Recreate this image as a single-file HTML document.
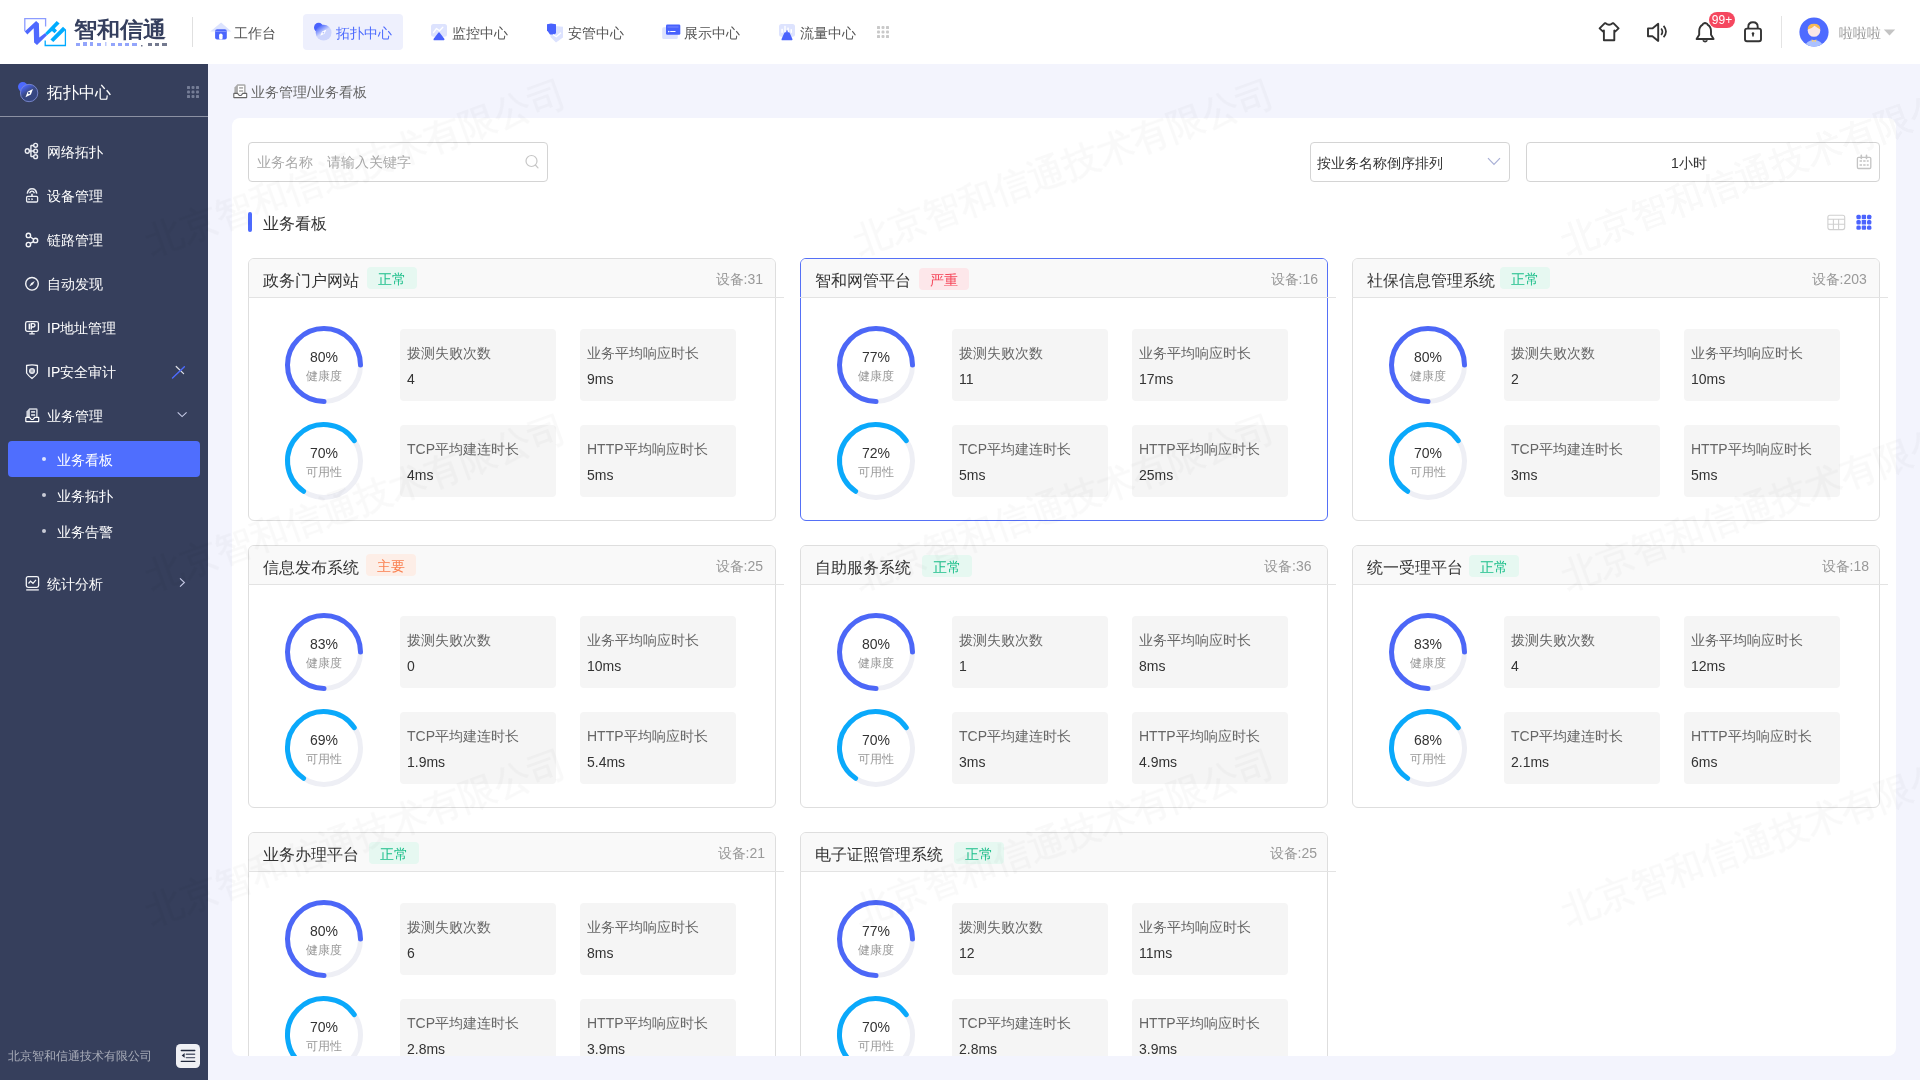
<!DOCTYPE html>
<html><head><meta charset="utf-8">
<style>
*{margin:0;padding:0;box-sizing:border-box}
html,body{width:1920px;height:1080px;overflow:hidden}
body{position:relative;background:#f3f4fd;font-family:"Liberation Sans",sans-serif;color:#333;font-size:14px}
.abs{position:absolute}
#hdr{position:absolute;left:0;top:0;width:1920px;height:64px;background:#fff}
.nav{position:absolute;top:23px;height:20px;line-height:20px;font-size:14px;color:#555;white-space:nowrap}
.nav svg{position:absolute}
.nav.act{color:#4d6bfe}
#side{position:absolute;left:0;top:64px;width:208px;height:1016px;background:#363f5c}
.si{position:absolute;margin-top:1px;left:47px;font-size:14px;color:#fff;white-space:nowrap;line-height:20px}
.sic{position:absolute}
.sub{position:absolute;margin-top:1px;left:57px;font-size:14px;color:#fff;line-height:20px}
.dot{position:absolute;left:42px;width:4px;height:4px;border-radius:2px;background:#c9ccd6}
#panel{position:absolute;left:232px;top:118px;width:1664px;height:938px;background:#fff;border-radius:8px}
.inp{position:absolute;border:1px solid #d4d4d4;border-radius:4px;background:#fff}
.card{position:absolute;width:528px;height:263px;border:1px solid #dedede;border-radius:6px;background:#fff;overflow:hidden}
.card::before{content:"";position:absolute;left:0;top:0;right:0;height:39px;background:#f9f9f9}
.card.sel{border-color:#5570f6}
.chl{position:absolute;width:536px;height:1px;background:#e3e3e3}
.ctitle{position:absolute;font-size:16px;color:#333;line-height:22px;white-space:nowrap}
.tag{position:absolute;height:22px;line-height:24px;width:50px;text-align:center;border-radius:4px;font-size:14px}
.tn{background:#e6f8f1;color:#1dbf8b}
.ts{background:#fde7ea;color:#f5475b}
.tm{background:#fdeee7;color:#fa8050}
.cdev{position:absolute;white-space:nowrap;font-size:14px;color:#999;line-height:20px}
.ring{position:absolute}
.rpct{position:absolute;width:60px;text-align:center;font-size:14px;color:#333;line-height:18px}
.rlab{position:absolute;width:60px;text-align:center;font-size:12px;color:#999;line-height:16px}
.mbox{position:absolute;width:156px;height:72px;background:#f5f5f5;border-radius:4px}
.mt{position:absolute;left:7px;top:14px;font-size:14px;color:#666;line-height:20px;white-space:nowrap}
.mv{position:absolute;left:7px;top:40px;font-size:14px;color:#333;line-height:20px}
.wm{position:absolute;white-space:nowrap;font-size:36.5px;line-height:40px;color:#000;-webkit-text-stroke:0.7px #000;transform:translate(-50%,-50%) rotate(-20deg)}
</style></head><body><div id="root" style="position:absolute;left:0;top:0;width:1920px;height:1080px;overflow:hidden;will-change:transform;background:#f3f4fd">
<div id="hdr">
  <svg class="abs" style="left:20px;top:12px" width="50" height="40" viewBox="0 0 50 40">
    <path d="M4.8 19.3V6.7H25.6V14.4" stroke="#8c9cff" stroke-width="1.3" fill="none"/>
    <path d="M25.2 28.5V33.5H45.4V17.4" stroke="#00aaff" stroke-width="1.3" fill="none"/>
    <path d="M4.8 19.6L16.1 8.9L18.9 11.5L19.3 25.6L25.2 20.9L27 23.3L17 33L14.1 30.4L13.7 16.3L7.4 22.6Z" fill="#4f69ff"/>
    <path d="M25.2 20.9L36.7 8.9L39.6 11.5L34.8 16.3L37 18.6L34.5 21.2L32 18.9L27 23.3Z" fill="#00acff"/>
    <path d="M30.4 27.4L43 14.8L45.9 17.4L33.3 30Z" fill="#00acff"/>
  </svg>
  <div class="abs" style="left:74px;top:15px;font-size:23px;font-weight:900;color:#353f5e;line-height:28px;letter-spacing:0px;transform:scaleY(0.95)">智和信通</div>
  <svg class="abs" style="left:74px;top:42px" width="95" height="5" viewBox="0 0 95 5">
    <g fill="#7088fa" opacity="0.75">
    <rect x="2" y="1" width="4" height="3"/><rect x="9" y="0" width="4" height="4"/><rect x="16" y="0" width="3" height="4"/><rect x="23" y="1" width="4" height="3"/><rect x="31" y="0" width="1.5" height="4" opacity=".6"/><rect x="37" y="1" width="4" height="3"/><rect x="44" y="1" width="4" height="3"/><rect x="51" y="1" width="4" height="3"/><rect x="58" y="1" width="5" height="3"/>
    </g><g fill="#3a4260" opacity="0.7"><rect x="67" y="3" width="1.5" height="1.5"/><rect x="74" y="1" width="4" height="3"/><rect x="81" y="1" width="4" height="3"/><rect x="88" y="1" width="5" height="3"/></g>
  </svg>
  <div class="abs" style="left:192px;top:17px;width:1px;height:30px;background:#e0e0e0"></div>
  <!-- nav: home -->
  <svg class="abs" style="left:210px;top:22px" width="22" height="19" viewBox="0 0 22 19">
    <path d="M0.3 9.6L11.1 0.5L21.4 9.6Z" fill="#dce3fe"/>
    <rect x="5.1" y="7.3" width="11.7" height="10.3" rx="2" fill="#4b66fd"/>
    <rect x="5.1" y="9.2" width="11.7" height="0.8" fill="#8c9dfd"/>
    <rect x="9.1" y="11.6" width="3.5" height="6" rx="1.7" fill="#fff"/>
  </svg>
  <div class="nav" style="left:234px"><span>工作台</span></div>
  <div class="abs" style="left:303px;top:14px;width:100px;height:36px;background:#eef0fd;border-radius:4px"></div>
  <svg class="abs" style="left:312px;top:20px" width="22" height="22" viewBox="0 0 22 22">
    <defs><linearGradient id="cg" x1="0.2" y1="0.1" x2="0.7" y2="0.8"><stop offset="0" stop-color="#4a66fd"/><stop offset="0.55" stop-color="#cdd5fd"/><stop offset="1" stop-color="#cdd5fd"/></linearGradient></defs>
    <circle cx="6.6" cy="7.4" r="4.6" fill="#4a62fd"/>
    <circle cx="11.6" cy="12.7" r="7.9" fill="url(#cg)"/>
    <path d="M14.4 9.4L12.6 13.8L8.3 15.8L10.1 11.4Z" fill="#fff"/>
    <circle cx="11.4" cy="12.6" r="0.9" fill="#b8c3fd"/>
  </svg>
  <div class="nav act" style="left:336px"><span>拓扑中心</span></div>
  <svg class="abs" style="left:429px;top:22px" width="20" height="20" viewBox="0 0 20 20">
    <rect x="2" y="2" width="16" height="12.8" rx="2.5" fill="#dde3fe"/>
    <path d="M4.5 10.5L7.5 6.5L10.5 8.8L13.8 5.2" stroke="#fff" stroke-width="1.3" fill="none" stroke-linecap="round" stroke-linejoin="round"/>
    <path d="M10 11.2L14.6 17.4H5.4Z" fill="#4a63fd" stroke="#4a63fd" stroke-width="1.8" stroke-linejoin="round"/>
  </svg>
  <div class="nav" style="left:452px"><span>监控中心</span></div>
  <svg class="abs" style="left:545px;top:22px" width="20" height="22" viewBox="0 0 20 22">
    <path d="M5 4.5L12 4.2L18 4.8V15.5L11 20.5L5.5 15V4.5Z" fill="#dce2fe"/>
    <path d="M2 2.3L6 1.6L11 2.2V11.2L9 12.4H5L2 8.3Z" fill="#4862fd"/>
    <path d="M8 12.5L11.3 14.8L16 10.8" stroke="#fff" stroke-width="1.3" fill="none"/>
  </svg>
  <div class="nav" style="left:568px"><span>安管中心</span></div>
  <svg class="abs" style="left:661px;top:22px" width="21" height="20" viewBox="0 0 21 20">
    <rect x="1.2" y="5.2" width="15.6" height="11.8" rx="1.5" fill="#dce2fe"/>
    <rect x="5" y="2.4" width="14.3" height="10.3" rx="1.3" fill="#4862fd"/>
    <rect x="6.5" y="4.6" width="11" height="0.8" fill="#8797fd"/>
    <rect x="9.2" y="9" width="5.3" height="1" fill="#fff"/>
    <circle cx="7.8" cy="9.6" r="0.8" fill="#fff"/>
  </svg>
  <div class="nav" style="left:684px"><span>展示中心</span></div>
  <svg class="abs" style="left:777px;top:22px" width="20" height="20" viewBox="0 0 20 20">
    <rect x="2" y="2" width="16" height="12.8" rx="2.5" fill="#dde3fe"/>
    <rect x="4.3" y="6.8" width="1.6" height="4" fill="#fff"/><rect x="7.3" y="3.8" width="1.4" height="7" fill="#fff"/><rect x="10.3" y="5.6" width="1.5" height="5" fill="#fff"/><rect x="13.5" y="7.2" width="1.5" height="3.6" fill="#fff"/>
    <path d="M8.2 11.2H11.8L14.6 17.4H5.4Z" fill="#4a63fd" stroke="#4a63fd" stroke-width="1.8" stroke-linejoin="round"/>
    <rect x="9.3" y="8.2" width="1.4" height="3" rx="0.7" fill="#4a63fd"/>
  </svg>
  <div class="nav" style="left:800px"><span>流量中心</span></div>
  <svg class="abs" style="left:876px;top:25px" width="14" height="14" viewBox="0 0 14 14"><g fill="#c9c9c9">
    <rect x="1" y="1" width="3" height="3" rx=".6"/><rect x="5.5" y="1" width="3" height="3" rx="1"/><rect x="10" y="1" width="3" height="3" rx=".6"/>
    <rect x="1" y="5.5" width="3" height="3" rx="1"/><rect x="5.5" y="5.5" width="3" height="3" rx="1.2"/><rect x="10" y="5.5" width="3" height="3" rx="1"/>
    <rect x="1" y="10" width="3" height="3" rx=".6"/><rect x="5.5" y="10" width="3" height="3" rx="1"/><rect x="10" y="10" width="3" height="3" rx=".6"/></g></svg>
  <!-- right icons -->
  <svg class="abs" style="left:1596px;top:20px" width="26" height="24" viewBox="0 0 26 24" fill="none" stroke="#333" stroke-width="1.9" stroke-linejoin="round">
    <path d="M8.6 3.3H9.6Q13.1 6.2 16.6 3.3H17.6L22.6 8.4L19.4 11.4L18.3 10.5V20.3H7.9V10.5L6.8 11.4L3.6 8.4Z"/>
  </svg>
  <svg class="abs" style="left:1645px;top:21px" width="24" height="22" viewBox="0 0 24 22" fill="none" stroke="#333" stroke-width="1.9" stroke-linejoin="round">
    <path d="M3 7.4H7.4L13.2 2.8V19.9L7.4 15.3H3Z"/>
    <path d="M16.2 7.5Q18.6 10.8 16.2 14M18.6 4.9Q23.4 10.6 18.6 16.3" stroke-width="1.7"/>
  </svg>
  <svg class="abs" style="left:1694px;top:20px" width="22" height="24" viewBox="0 0 22 24" fill="none" stroke="#333" stroke-width="1.9" stroke-linejoin="round">
    <path d="M11 3Q13.5 3.5 13.5 4.6Q17 6.5 17 11V14.8L19.6 19H2.6L5.2 14.8V11Q5.2 6.5 8.7 4.6Q8.7 3.5 11 3Z"/>
    <path d="M8.8 20.4Q11.1 23 13.4 20.4" fill="#666" stroke="#333" stroke-width="1.4"/>
  </svg>
  <div class="abs" style="left:1709px;top:12px;width:26px;height:16px;border-radius:8px;background:#f5475f;color:#fff;font-size:12px;line-height:16px;text-align:center">99+</div>
  <svg class="abs" style="left:1742px;top:20px" width="22" height="24" viewBox="0 0 22 24" fill="none" stroke="#333" stroke-width="1.9">
    <path d="M6.3 8.2V6.8Q6.3 2.2 11 2.2Q15.7 2.2 15.7 6.8V8.2"/>
    <rect x="3" y="8.6" width="16" height="12.6" rx="2"/>
    <path d="M11 13.2V16.6" stroke-width="1.6"/><circle cx="11" cy="13.6" r="1.3" fill="#333" stroke="none"/>
  </svg>
  <div class="abs" style="left:1781px;top:16px;width:1px;height:32px;background:#e4e4e4"></div>
  <svg class="abs" style="left:1799px;top:17px" width="30" height="30" viewBox="0 0 30 30">
    <defs><clipPath id="av"><circle cx="15" cy="15" r="14.6"/></clipPath></defs>
    <circle cx="15" cy="15" r="14.6" fill="#4e6bff"/>
    <g clip-path="url(#av)">
    <ellipse cx="15" cy="30" rx="9" ry="7" fill="#abc1ff"/>
    <circle cx="15" cy="13.5" r="6.3" fill="#fbe7e6"/>
    <path d="M8.6 12.6Q8.6 6.7 15 6.7Q21.4 6.7 21.4 12.6Q18.5 11 15.5 8.8Q13 11.8 8.6 12.6Z" fill="#f7b955"/>
    <path d="M12.6 22.3L15 23.8L17.4 22.3L17 25L15 24.2L13 25Z" fill="#f9cf73"/>
    </g>
  </svg>
  <div class="abs" style="left:1839px;top:23px;font-size:14px;color:#999;line-height:20px">啦啦啦</div>
  <svg class="abs" style="left:1883px;top:29px" width="13" height="7" viewBox="0 0 13 7"><path d="M0.8 0.6H12.2L6.5 6.4Z" fill="#c4c4c4"/></svg>
</div>
<div id="side">
  <svg class="abs" style="left:14px;top:14px" width="30" height="30" viewBox="0 0 30 30">
    <defs><linearGradient id="sg" x1="0.2" y1="0.1" x2="0.6" y2="0.7"><stop offset="0" stop-color="#4a66fd"/><stop offset="0.6" stop-color="#3a4a86"/><stop offset="1" stop-color="#364680"/></linearGradient></defs>
    <circle cx="8.8" cy="8.8" r="4.8" fill="#4d69ff"/>
    <circle cx="15.1" cy="15.0" r="8.7" fill="url(#sg)" stroke="#7c8ad0" stroke-width="0.9"/>
    <path d="M18.9 11L16.9 16.5L11.5 19.3L13.6 13.8Z" fill="#fff"/>
    <circle cx="15" cy="15" r="1" fill="#3a4a86"/>
  </svg>
  <div class="abs" style="left:47px;top:18px;font-size:16px;color:#fff;line-height:22px">拓扑中心</div>
  <svg class="abs" style="left:186px;top:21px" width="14" height="14" viewBox="0 0 14 14"><g fill="#757d96">
    <rect x="1" y="1" width="3" height="3" rx=".6"/><rect x="5.5" y="1" width="3" height="3" rx="1"/><rect x="10" y="1" width="3" height="3" rx=".6"/>
    <rect x="1" y="5.5" width="3" height="3" rx="1"/><rect x="5.5" y="5.5" width="3" height="3" rx="1.2"/><rect x="10" y="5.5" width="3" height="3" rx="1"/>
    <rect x="1" y="10" width="3" height="3" rx=".6"/><rect x="5.5" y="10" width="3" height="3" rx="1"/><rect x="10" y="10" width="3" height="3" rx=".6"/></g></svg>
  <div class="abs" style="left:0;top:52px;width:208px;height:1px;background:#8c91a3"></div>
  <!-- icons -->
  <svg class="abs" style="left:22px;top:77px" width="20" height="20" viewBox="0 0 20 20" fill="none" stroke="#eceef3" stroke-width="1.4">
    <ellipse cx="5.3" cy="10" rx="2" ry="2.3"/>
    <path d="M7.3 10H12.5M8.9 4.3V15.7M8.9 4.5H12M8.9 15.5H12"/>
    <circle cx="13.6" cy="4.3" r="1.9"/><circle cx="13.6" cy="10" r="1.9"/><circle cx="13.6" cy="15.7" r="1.9"/>
  </svg>
  <svg class="abs" style="left:22px;top:121px" width="20" height="20" viewBox="0 0 20 20" fill="none" stroke="#eceef3" stroke-width="1.3">
    <path d="M5.3 8.7Q6 3.8 10 3.8Q14 3.8 14.7 8.7" stroke-width="1.5"/>
    <path d="M7.6 8.2Q8.2 6.2 10 6.2Q11.8 6.2 12.4 8.2"/>
    <path d="M10 8.8V11" stroke-width="1.6"/>
    <rect x="4.6" y="11.4" width="11" height="5.6" rx="1"/>
    <path d="M6.6 13.6L8 14.2L6.6 14.8ZM9.6 13.6L11 14.2L9.6 14.8Z" fill="#eceef3" stroke-width="0.6"/>
  </svg>
  <svg class="abs" style="left:22px;top:165px" width="20" height="20" viewBox="0 0 20 20" fill="none" stroke="#f4f5f8" stroke-width="1.4">
    <circle cx="6.4" cy="6.4" r="2.2"/><circle cx="13.5" cy="11.4" r="2.2"/><circle cx="6.4" cy="15.6" r="2.2"/>
    <path d="M8.2 7.7L11.6 10.2M11.6 12.6L8.2 14.4"/>
  </svg>
  <svg class="abs" style="left:22px;top:209px" width="20" height="20" viewBox="0 0 20 20" fill="none" stroke="#f4f5f8" stroke-width="1.4">
    <circle cx="10" cy="10.8" r="6.3"/>
    <path d="M12.8 8L10.9 11.6L7.3 13.5L9.2 9.9Z" fill="#f4f5f8" stroke="none"/>
  </svg>
  <svg class="abs" style="left:22px;top:253px" width="20" height="20" viewBox="0 0 20 20" fill="none" stroke="#f4f5f8" stroke-width="1.3">
    <rect x="3.6" y="4.7" width="12.8" height="9.6" rx="1.8"/>
    <path d="M10 14.6V16.4M7.3 16.8H12.7" stroke-width="1.3"/>
    <path d="M7.4 6.6V12.4" stroke-width="1.6"/>
    <path d="M9.3 12.4V6.6H11.3Q13 6.6 13 8.3Q13 10 11.3 10H9.3" stroke-width="1.4"/>
  </svg>
  <svg class="abs" style="left:22px;top:297px" width="20" height="20" viewBox="0 0 20 20" fill="none" stroke="#f4f5f8" stroke-width="1.3">
    <path d="M4.6 4.5Q10 3.4 15.4 4.5V12Q13 15.5 10 17.4Q7 15.5 4.6 12Z"/>
    <circle cx="10" cy="10" r="3" fill="#eceef3" stroke="none"/>
    <path d="M9.2 8.4V11.4M10.8 8.4V11.4" stroke="#363f5c" stroke-width="0.6"/>
  </svg>
  <svg class="abs" style="left:18px;top:338px" width="26" height="26" viewBox="0 0 26 26">
    <path d="M8.4 15.5V9.4L11.4 6.3H18.2Q19.6 6.3 19.6 7.7V15.5Z" fill="#d0d3dc"/>
    <rect x="11.9" y="7.8" width="6.2" height="7.8" fill="#363f5c"/>
    <rect x="13.1" y="9.1" width="4" height="1.6" fill="#e3e5ea"/><rect x="13.1" y="12.2" width="4" height="1.6" fill="#e3e5ea"/>
    <path d="M7.8 15.4H11.5L13.3 17.5H15.1L16.8 15.4H20.4Q20.7 15.4 20.7 15.8V19.2Q20.7 19.6 20.3 19.6H8.2Q7.8 19.6 7.8 19.2V15.8Q7.8 15.4 8.2 15.4Z" fill="#363f5c" stroke="#fff" stroke-width="1.2"/>
  </svg>
  <svg class="abs" style="left:22px;top:509px" width="20" height="20" viewBox="0 0 20 20" fill="none" stroke="#f4f5f8" stroke-width="1.3">
    <rect x="4.3" y="3.7" width="12.3" height="10.6" rx="1.8"/>
    <path d="M6.5 10.5L8.5 8.2L11 10.3L14 6.8" stroke-width="1.2"/>
    <path d="M4.2 16.9H16.8" stroke-width="1.3"/>
  </svg>
  <div class="si" style="top:77px">网络拓扑</div>
  <div class="si" style="top:121px">设备管理</div>
  <div class="si" style="top:165px">链路管理</div>
  <div class="si" style="top:209px">自动发现</div>
  <div class="si" style="top:253px">IP地址管理</div>
  <div class="si" style="top:297px">IP安全审计</div>
  <svg class="abs" style="left:170px;top:300px" width="18" height="16" viewBox="0 0 18 16">
    <path d="M6.2 2.5L13.6 9.6" stroke="#dfe1e8" stroke-width="1.2" stroke-linecap="round"/>
    <path d="M2.5 13.9L14.4 2.7" stroke="#4d6bfe" stroke-width="1.4" stroke-linecap="round"/>
  </svg>
  <div class="si" style="top:341px">业务管理</div>
  <svg class="abs" style="left:174px;top:344px" width="16" height="12" viewBox="0 0 16 12"><path d="M3.7 4.3L8.1 8.6L12.6 4.3" fill="none" stroke="#c8cce8" stroke-width="1.1"/></svg>
  <div class="abs" style="left:8px;top:377px;width:192px;height:36px;background:#4f6efe;border-radius:4px"></div>
  <div class="dot" style="top:393px;background:#dfe4fd"></div><div class="sub" style="top:385px">业务看板</div>
  <div class="dot" style="top:429px"></div><div class="sub" style="top:421px">业务拓扑</div>
  <div class="dot" style="top:465px"></div><div class="sub" style="top:457px">业务告警</div>
  <div class="si" style="top:509px">统计分析</div>
  <svg class="abs" style="left:176px;top:512px" width="12" height="16" viewBox="0 0 12 16"><path d="M4 2.3L8.4 6.5L4 10.7" fill="none" stroke="#c8cce8" stroke-width="1.1"/></svg>
  <div class="abs" style="left:8px;top:984px;font-size:12px;color:#a9adb9;line-height:16px">北京智和信通技术有限公司</div>
  <svg class="abs" style="left:176px;top:980px" width="24" height="24" viewBox="0 0 24 24">
    <rect x="0" y="0" width="24" height="24" rx="4.5" fill="#eff0f4"/>
    <path d="M5.3 6.5H18.8M5.3 17.4H18.8" stroke="#222a3e" stroke-width="1.3" stroke-linecap="round"/>
    <path d="M10.3 10.2H18.6M10.3 13.6H18.6" stroke="#5c6275" stroke-width="1.4" stroke-linecap="round"/>
    <path d="M8.6 9.1V13.8L5.7 11.45Z" fill="#222a3e"/>
  </svg>
</div>
<div class="abs" style="left:251px;top:82px;font-size:14px;color:#666;line-height:20px">业务管理/业务看板</div>
<div id="panel"></div>
<div class="inp" style="left:248px;top:142px;width:300px;height:40px"></div>
<div class="abs" style="left:257px;top:152px;font-size:14px;color:#a9a9a9;line-height:20px">业务名称</div>
<div class="abs" style="left:327px;top:152px;font-size:14px;color:#a9a9a9;line-height:20px">请输入关键字</div>
<div class="inp" style="left:1310px;top:142px;width:200px;height:40px"></div>
<div class="abs" style="left:1317px;top:153px;font-size:14px;color:#333;line-height:20px">按业务名称倒序排列</div>
<div class="inp" style="left:1526px;top:142px;width:354px;height:40px"></div>
<div class="abs" style="left:1671px;top:153px;font-size:14px;color:#333;line-height:20px">1小时</div>
<svg class="abs" style="left:524px;top:153px" width="16" height="18" viewBox="0 0 16 18" fill="none" stroke="#c6c6c6" stroke-width="1.2">
  <circle cx="7.5" cy="8" r="5.5"/><path d="M11.4 12L14 14.8" stroke-linecap="round"/>
</svg>
<svg class="abs" style="left:1484px;top:154px" width="20" height="16" viewBox="0 0 20 16" fill="none" stroke="#a9b0d6" stroke-width="1.2"><path d="M4 4.2L10 10.4L16 4.2"/></svg>
<svg class="abs" style="left:1854px;top:152px" width="20" height="20" viewBox="0 0 20 20" fill="none" stroke="#c4c4c4" stroke-width="1.3">
  <path d="M4.6 5.4H15.6Q16.8 5.4 16.8 6.6V15.3Q16.8 16.5 15.6 16.5H4.6Q3.4 16.5 3.4 15.3V6.6Q3.4 5.4 4.6 5.4Z"/>
  <path d="M7.3 3.3V6.5M12.5 3.3V6.5" stroke-width="1.6" stroke-linecap="round"/>
  <path d="M5.6 9H14.7M5.6 13H14.7" stroke-width="1.7" stroke-dasharray="2.4 1.2"/>
</svg>
<svg class="abs" style="left:1824px;top:211px" width="24" height="22" viewBox="0 0 24 22" fill="none" stroke="#d0d0d0" stroke-width="1.1">
  <rect x="3.9" y="4.3" width="16.8" height="14.3" rx="2"/>
  <path d="M3.9 8.3H20.7M3.9 13.3H20.7M9.4 8.3V18.6M14.6 8.3V18.6"/>
</svg>
<svg class="abs" style="left:1854px;top:212px" width="20" height="20" viewBox="0 0 20 20"><g fill="#4b63fe">
  <rect x="2.4" y="2.8" width="4.4" height="4.4" rx="1.5"/><rect x="7.7" y="2.8" width="4.4" height="4.4" rx="1"/><rect x="13" y="2.8" width="4.4" height="4.4" rx="1.5"/>
  <rect x="2.4" y="8.1" width="4.4" height="4.4" rx="1.5"/><rect x="7.7" y="8.1" width="4.4" height="4.4" rx="0.5"/><rect x="13" y="8.1" width="4.4" height="4.4" rx="1.5"/>
  <rect x="2.4" y="13.4" width="4.4" height="4.4" rx="1.5"/><rect x="7.7" y="13.4" width="4.4" height="4.4" rx="1"/><rect x="13" y="13.4" width="4.4" height="4.4" rx="1.5"/></g>
</svg>
<svg class="abs" style="left:226px;top:78px" width="26" height="26" viewBox="0 0 26 26">
  <path d="M8.4 15.5V9.4L11.4 6.3H18.2Q19.6 6.3 19.6 7.7V15.5Z" fill="#ababab"/>
  <rect x="11.9" y="7.8" width="6.2" height="7.8" fill="#fff"/>
  <rect x="13.1" y="9.1" width="4" height="1.6" fill="#aaa"/><rect x="13.1" y="12.2" width="4" height="1.6" fill="#aaa"/>
  <path d="M7.8 15.4H11.5L13.3 17.5H15.1L16.8 15.4H20.4Q20.7 15.4 20.7 15.8V19.2Q20.7 19.6 20.3 19.6H8.2Q7.8 19.6 7.8 19.2V15.8Q7.8 15.4 8.2 15.4Z" fill="#fff" stroke="#666" stroke-width="1.1"/>
</svg>
<div class="abs" style="left:248px;top:212px;width:4px;height:20px;background:#4d6bfe;border-radius:2px"></div>
<div class="abs" style="left:263px;top:213px;font-size:16px;color:#333;line-height:22px">业务看板</div>
<div id="clip" style="position:absolute;left:0;top:0;width:1920px;height:1056px;overflow:hidden">
<div class="card" style="left:248px;top:258px"></div>
<div class="chl" style="left:248px;top:297px"></div>
<div class="ctitle" style="left:263px;top:270px">政务门户网站</div>
<div class="tag tn" style="left:367px;top:267px">正常</div>
<div class="cdev" style="left:715.5px;top:269px">设备:31</div>
<svg class="ring" style="left:283px;top:324px" width="82" height="82" viewBox="283 324 82 82"><circle cx="324" cy="365" r="36.5" fill="none" stroke="#eeeff5" stroke-width="5"/><path d="M324.00 401.50 A36.5 36.5 0 1 1 360.50 365.00" fill="none" stroke="#4c67f7" stroke-width="5" stroke-linecap="round"/></svg>
<div class="rpct" style="left:294px;top:348px">80%</div><div class="rlab" style="left:294px;top:368px">健康度</div>
<svg class="ring" style="left:283px;top:420px" width="82" height="82" viewBox="283 420 82 82"><circle cx="324" cy="461" r="36.5" fill="none" stroke="#eeeff5" stroke-width="5"/><path d="M303.59 491.26 A36.5 36.5 0 1 1 354.26 440.59" fill="none" stroke="#0aa9fb" stroke-width="5" stroke-linecap="round"/></svg>
<div class="rpct" style="left:294px;top:444px">70%</div><div class="rlab" style="left:294px;top:464px">可用性</div>
<div class="mbox" style="left:400px;top:329px"><div class="mt">拨测失败次数</div><div class="mv">4</div></div>
<div class="mbox" style="left:580px;top:329px"><div class="mt">业务平均响应时长</div><div class="mv">9ms</div></div>
<div class="mbox" style="left:400px;top:425px"><div class="mt">TCP平均建连时长</div><div class="mv">4ms</div></div>
<div class="mbox" style="left:580px;top:425px"><div class="mt">HTTP平均响应时长</div><div class="mv">5ms</div></div>
<div class="card sel" style="left:800px;top:258px"></div>
<div class="chl" style="left:800px;top:297px"></div>
<div class="ctitle" style="left:815px;top:270px">智和网管平台</div>
<div class="tag ts" style="left:919px;top:268px">严重</div>
<div class="cdev" style="left:1270.5px;top:269px">设备:16</div>
<svg class="ring" style="left:835px;top:324px" width="82" height="82" viewBox="835 324 82 82"><circle cx="876" cy="365" r="36.5" fill="none" stroke="#eeeff5" stroke-width="5"/><path d="M876.00 401.50 A36.5 36.5 0 1 1 912.50 365.00" fill="none" stroke="#4c67f7" stroke-width="5" stroke-linecap="round"/></svg>
<div class="rpct" style="left:846px;top:348px">77%</div><div class="rlab" style="left:846px;top:368px">健康度</div>
<svg class="ring" style="left:835px;top:420px" width="82" height="82" viewBox="835 420 82 82"><circle cx="876" cy="461" r="36.5" fill="none" stroke="#eeeff5" stroke-width="5"/><path d="M855.59 491.26 A36.5 36.5 0 1 1 906.26 440.59" fill="none" stroke="#0aa9fb" stroke-width="5" stroke-linecap="round"/></svg>
<div class="rpct" style="left:846px;top:444px">72%</div><div class="rlab" style="left:846px;top:464px">可用性</div>
<div class="mbox" style="left:952px;top:329px"><div class="mt">拨测失败次数</div><div class="mv">11</div></div>
<div class="mbox" style="left:1132px;top:329px"><div class="mt">业务平均响应时长</div><div class="mv">17ms</div></div>
<div class="mbox" style="left:952px;top:425px"><div class="mt">TCP平均建连时长</div><div class="mv">5ms</div></div>
<div class="mbox" style="left:1132px;top:425px"><div class="mt">HTTP平均响应时长</div><div class="mv">25ms</div></div>
<div class="card" style="left:1352px;top:258px"></div>
<div class="chl" style="left:1352px;top:297px"></div>
<div class="ctitle" style="left:1367px;top:270px">社保信息管理系统</div>
<div class="tag tn" style="left:1500px;top:267px">正常</div>
<div class="cdev" style="left:1811.5px;top:269px">设备:203</div>
<svg class="ring" style="left:1387px;top:324px" width="82" height="82" viewBox="1387 324 82 82"><circle cx="1428" cy="365" r="36.5" fill="none" stroke="#eeeff5" stroke-width="5"/><path d="M1428.00 401.50 A36.5 36.5 0 1 1 1464.50 365.00" fill="none" stroke="#4c67f7" stroke-width="5" stroke-linecap="round"/></svg>
<div class="rpct" style="left:1398px;top:348px">80%</div><div class="rlab" style="left:1398px;top:368px">健康度</div>
<svg class="ring" style="left:1387px;top:420px" width="82" height="82" viewBox="1387 420 82 82"><circle cx="1428" cy="461" r="36.5" fill="none" stroke="#eeeff5" stroke-width="5"/><path d="M1407.59 491.26 A36.5 36.5 0 1 1 1458.26 440.59" fill="none" stroke="#0aa9fb" stroke-width="5" stroke-linecap="round"/></svg>
<div class="rpct" style="left:1398px;top:444px">70%</div><div class="rlab" style="left:1398px;top:464px">可用性</div>
<div class="mbox" style="left:1504px;top:329px"><div class="mt">拨测失败次数</div><div class="mv">2</div></div>
<div class="mbox" style="left:1684px;top:329px"><div class="mt">业务平均响应时长</div><div class="mv">10ms</div></div>
<div class="mbox" style="left:1504px;top:425px"><div class="mt">TCP平均建连时长</div><div class="mv">3ms</div></div>
<div class="mbox" style="left:1684px;top:425px"><div class="mt">HTTP平均响应时长</div><div class="mv">5ms</div></div>
<div class="card" style="left:248px;top:545px"></div>
<div class="chl" style="left:248px;top:584px"></div>
<div class="ctitle" style="left:263px;top:557px">信息发布系统</div>
<div class="tag tm" style="left:366px;top:554px">主要</div>
<div class="cdev" style="left:715.5px;top:556px">设备:25</div>
<svg class="ring" style="left:283px;top:611px" width="82" height="82" viewBox="283 611 82 82"><circle cx="324" cy="652" r="36.5" fill="none" stroke="#eeeff5" stroke-width="5"/><path d="M324.00 688.50 A36.5 36.5 0 1 1 360.50 652.00" fill="none" stroke="#4c67f7" stroke-width="5" stroke-linecap="round"/></svg>
<div class="rpct" style="left:294px;top:635px">83%</div><div class="rlab" style="left:294px;top:655px">健康度</div>
<svg class="ring" style="left:283px;top:707px" width="82" height="82" viewBox="283 707 82 82"><circle cx="324" cy="748" r="36.5" fill="none" stroke="#eeeff5" stroke-width="5"/><path d="M303.59 778.26 A36.5 36.5 0 1 1 354.26 727.59" fill="none" stroke="#0aa9fb" stroke-width="5" stroke-linecap="round"/></svg>
<div class="rpct" style="left:294px;top:731px">69%</div><div class="rlab" style="left:294px;top:751px">可用性</div>
<div class="mbox" style="left:400px;top:616px"><div class="mt">拨测失败次数</div><div class="mv">0</div></div>
<div class="mbox" style="left:580px;top:616px"><div class="mt">业务平均响应时长</div><div class="mv">10ms</div></div>
<div class="mbox" style="left:400px;top:712px"><div class="mt">TCP平均建连时长</div><div class="mv">1.9ms</div></div>
<div class="mbox" style="left:580px;top:712px"><div class="mt">HTTP平均响应时长</div><div class="mv">5.4ms</div></div>
<div class="card" style="left:800px;top:545px"></div>
<div class="chl" style="left:800px;top:584px"></div>
<div class="ctitle" style="left:815px;top:557px">自助服务系统</div>
<div class="tag tn" style="left:922px;top:555px">正常</div>
<div class="cdev" style="left:1264.0px;top:556px">设备:36</div>
<svg class="ring" style="left:835px;top:611px" width="82" height="82" viewBox="835 611 82 82"><circle cx="876" cy="652" r="36.5" fill="none" stroke="#eeeff5" stroke-width="5"/><path d="M876.00 688.50 A36.5 36.5 0 1 1 912.50 652.00" fill="none" stroke="#4c67f7" stroke-width="5" stroke-linecap="round"/></svg>
<div class="rpct" style="left:846px;top:635px">80%</div><div class="rlab" style="left:846px;top:655px">健康度</div>
<svg class="ring" style="left:835px;top:707px" width="82" height="82" viewBox="835 707 82 82"><circle cx="876" cy="748" r="36.5" fill="none" stroke="#eeeff5" stroke-width="5"/><path d="M855.59 778.26 A36.5 36.5 0 1 1 906.26 727.59" fill="none" stroke="#0aa9fb" stroke-width="5" stroke-linecap="round"/></svg>
<div class="rpct" style="left:846px;top:731px">70%</div><div class="rlab" style="left:846px;top:751px">可用性</div>
<div class="mbox" style="left:952px;top:616px"><div class="mt">拨测失败次数</div><div class="mv">1</div></div>
<div class="mbox" style="left:1132px;top:616px"><div class="mt">业务平均响应时长</div><div class="mv">8ms</div></div>
<div class="mbox" style="left:952px;top:712px"><div class="mt">TCP平均建连时长</div><div class="mv">3ms</div></div>
<div class="mbox" style="left:1132px;top:712px"><div class="mt">HTTP平均响应时长</div><div class="mv">4.9ms</div></div>
<div class="card" style="left:1352px;top:545px"></div>
<div class="chl" style="left:1352px;top:584px"></div>
<div class="ctitle" style="left:1367px;top:557px">统一受理平台</div>
<div class="tag tn" style="left:1469px;top:555px">正常</div>
<div class="cdev" style="left:1821.5px;top:556px">设备:18</div>
<svg class="ring" style="left:1387px;top:611px" width="82" height="82" viewBox="1387 611 82 82"><circle cx="1428" cy="652" r="36.5" fill="none" stroke="#eeeff5" stroke-width="5"/><path d="M1428.00 688.50 A36.5 36.5 0 1 1 1464.50 652.00" fill="none" stroke="#4c67f7" stroke-width="5" stroke-linecap="round"/></svg>
<div class="rpct" style="left:1398px;top:635px">83%</div><div class="rlab" style="left:1398px;top:655px">健康度</div>
<svg class="ring" style="left:1387px;top:707px" width="82" height="82" viewBox="1387 707 82 82"><circle cx="1428" cy="748" r="36.5" fill="none" stroke="#eeeff5" stroke-width="5"/><path d="M1407.59 778.26 A36.5 36.5 0 1 1 1458.26 727.59" fill="none" stroke="#0aa9fb" stroke-width="5" stroke-linecap="round"/></svg>
<div class="rpct" style="left:1398px;top:731px">68%</div><div class="rlab" style="left:1398px;top:751px">可用性</div>
<div class="mbox" style="left:1504px;top:616px"><div class="mt">拨测失败次数</div><div class="mv">4</div></div>
<div class="mbox" style="left:1684px;top:616px"><div class="mt">业务平均响应时长</div><div class="mv">12ms</div></div>
<div class="mbox" style="left:1504px;top:712px"><div class="mt">TCP平均建连时长</div><div class="mv">2.1ms</div></div>
<div class="mbox" style="left:1684px;top:712px"><div class="mt">HTTP平均响应时长</div><div class="mv">6ms</div></div>
<div class="card" style="left:248px;top:832px"></div>
<div class="chl" style="left:248px;top:871px"></div>
<div class="ctitle" style="left:263px;top:844px">业务办理平台</div>
<div class="tag tn" style="left:369px;top:842px">正常</div>
<div class="cdev" style="left:717.5px;top:843px">设备:21</div>
<svg class="ring" style="left:283px;top:898px" width="82" height="82" viewBox="283 898 82 82"><circle cx="324" cy="939" r="36.5" fill="none" stroke="#eeeff5" stroke-width="5"/><path d="M324.00 975.50 A36.5 36.5 0 1 1 360.50 939.00" fill="none" stroke="#4c67f7" stroke-width="5" stroke-linecap="round"/></svg>
<div class="rpct" style="left:294px;top:922px">80%</div><div class="rlab" style="left:294px;top:942px">健康度</div>
<svg class="ring" style="left:283px;top:994px" width="82" height="82" viewBox="283 994 82 82"><circle cx="324" cy="1035" r="36.5" fill="none" stroke="#eeeff5" stroke-width="5"/><path d="M303.59 1065.26 A36.5 36.5 0 1 1 354.26 1014.59" fill="none" stroke="#0aa9fb" stroke-width="5" stroke-linecap="round"/></svg>
<div class="rpct" style="left:294px;top:1018px">70%</div><div class="rlab" style="left:294px;top:1038px">可用性</div>
<div class="mbox" style="left:400px;top:903px"><div class="mt">拨测失败次数</div><div class="mv">6</div></div>
<div class="mbox" style="left:580px;top:903px"><div class="mt">业务平均响应时长</div><div class="mv">8ms</div></div>
<div class="mbox" style="left:400px;top:999px"><div class="mt">TCP平均建连时长</div><div class="mv">2.8ms</div></div>
<div class="mbox" style="left:580px;top:999px"><div class="mt">HTTP平均响应时长</div><div class="mv">3.9ms</div></div>
<div class="card" style="left:800px;top:832px"></div>
<div class="chl" style="left:800px;top:871px"></div>
<div class="ctitle" style="left:815px;top:844px">电子证照管理系统</div>
<div class="tag tn" style="left:954px;top:842px">正常</div>
<div class="cdev" style="left:1269.5px;top:843px">设备:25</div>
<svg class="ring" style="left:835px;top:898px" width="82" height="82" viewBox="835 898 82 82"><circle cx="876" cy="939" r="36.5" fill="none" stroke="#eeeff5" stroke-width="5"/><path d="M876.00 975.50 A36.5 36.5 0 1 1 912.50 939.00" fill="none" stroke="#4c67f7" stroke-width="5" stroke-linecap="round"/></svg>
<div class="rpct" style="left:846px;top:922px">77%</div><div class="rlab" style="left:846px;top:942px">健康度</div>
<svg class="ring" style="left:835px;top:994px" width="82" height="82" viewBox="835 994 82 82"><circle cx="876" cy="1035" r="36.5" fill="none" stroke="#eeeff5" stroke-width="5"/><path d="M855.59 1065.26 A36.5 36.5 0 1 1 906.26 1014.59" fill="none" stroke="#0aa9fb" stroke-width="5" stroke-linecap="round"/></svg>
<div class="rpct" style="left:846px;top:1018px">70%</div><div class="rlab" style="left:846px;top:1038px">可用性</div>
<div class="mbox" style="left:952px;top:903px"><div class="mt">拨测失败次数</div><div class="mv">12</div></div>
<div class="mbox" style="left:1132px;top:903px"><div class="mt">业务平均响应时长</div><div class="mv">11ms</div></div>
<div class="mbox" style="left:952px;top:999px"><div class="mt">TCP平均建连时长</div><div class="mv">2.8ms</div></div>
<div class="mbox" style="left:1132px;top:999px"><div class="mt">HTTP平均响应时长</div><div class="mv">3.9ms</div></div>
</div>
<div id="wml" style="position:absolute;left:0;top:0;width:1920px;height:1080px;overflow:hidden;pointer-events:none;opacity:0.026"><div class="wm" style="left:-352.1px;top:-166.9px">北京智和信通技术有限公司</div><div class="wm" style="left:355.9px;top:-166.9px">北京智和信通技术有限公司</div><div class="wm" style="left:1064.0px;top:-166.9px">北京智和信通技术有限公司</div><div class="wm" style="left:1772.0px;top:-166.9px">北京智和信通技术有限公司</div><div class="wm" style="left:-352.1px;top:168.1px">北京智和信通技术有限公司</div><div class="wm" style="left:355.9px;top:168.1px">北京智和信通技术有限公司</div><div class="wm" style="left:1064.0px;top:168.1px">北京智和信通技术有限公司</div><div class="wm" style="left:1772.0px;top:168.1px">北京智和信通技术有限公司</div><div class="wm" style="left:-352.1px;top:503.1px">北京智和信通技术有限公司</div><div class="wm" style="left:355.9px;top:503.1px">北京智和信通技术有限公司</div><div class="wm" style="left:1064.0px;top:503.1px">北京智和信通技术有限公司</div><div class="wm" style="left:1772.0px;top:503.1px">北京智和信通技术有限公司</div><div class="wm" style="left:-352.1px;top:838.1px">北京智和信通技术有限公司</div><div class="wm" style="left:355.9px;top:838.1px">北京智和信通技术有限公司</div><div class="wm" style="left:1064.0px;top:838.1px">北京智和信通技术有限公司</div><div class="wm" style="left:1772.0px;top:838.1px">北京智和信通技术有限公司</div><div class="wm" style="left:-352.1px;top:1173.1px">北京智和信通技术有限公司</div><div class="wm" style="left:355.9px;top:1173.1px">北京智和信通技术有限公司</div><div class="wm" style="left:1064.0px;top:1173.1px">北京智和信通技术有限公司</div><div class="wm" style="left:1772.0px;top:1173.1px">北京智和信通技术有限公司</div></div></div></body></html>
